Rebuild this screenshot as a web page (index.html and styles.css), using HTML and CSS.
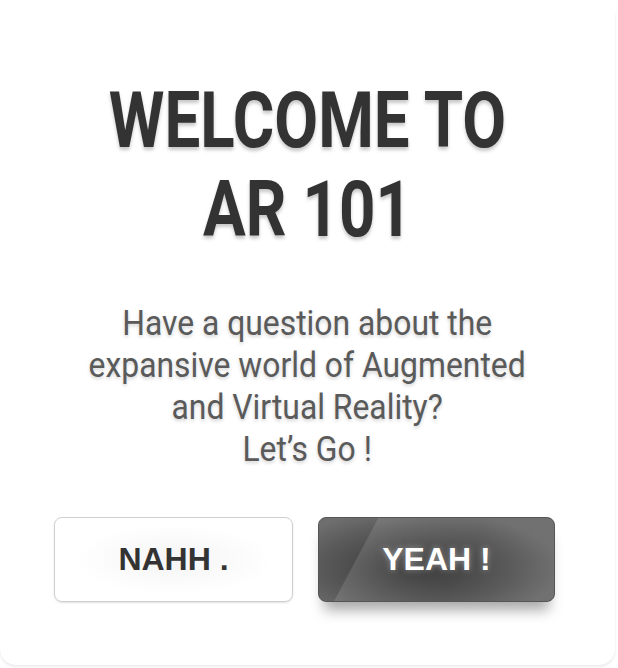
FILE: index.html
```html
<!DOCTYPE html>
<html>
<head>
<meta charset="utf-8">
<link rel="stylesheet" href="styles.css">
</head>
<body>
<div class="card">
  <h1 class="title"><span class="narrow">WELCOME TO<br>AR 101</span></h1>
  <p class="lead"><span class="narrow-lead">Have a question about the<br>expansive world of Augmented<br>and Virtual Reality?<br>Let’s Go !</span></p>
  <div class="actions">
    <button class="btn btn-no">NAHH .</button>
    <button class="btn btn-yes">YEAH !</button>
  </div>
</div>
</body>
</html>
```
FILE: styles.css
```css
html, body {
  margin: 0;
  padding: 0;
  background: #fff;
}
body {
  width: 618px;
  height: 668px;
  overflow: hidden;
}
.card {
  box-sizing: border-box;
  margin: 12px 3px 0 0;
  height: 653px;
  background: #fff;
  border-radius: 0 0 16px 16px;
  box-shadow: 0 2px 3px rgba(0,0,0,0.08), 0 0 1px rgba(0,0,0,0.06);
  padding-top: 65px;
  display: flex;
  flex-direction: column;
  align-items: center;
}
.title {
  margin: 0;
  font-family: Roboto, "Liberation Sans", sans-serif;
  font-weight: 700;
  font-size: 77px;
  line-height: 89px;
  color: #333;
  text-align: center;
  text-shadow: 0 3px 4px rgba(0,0,0,0.22);
}
.narrow {
  display: inline-block;
  transform: scaleX(0.826);
}
.lead {
  margin: 48px 0 0;
  font-family: Roboto, "Liberation Sans", sans-serif;
  font-weight: 400;
  font-size: 35px;
  line-height: 42px;
  color: #5a5a5a;
  text-align: center;
  text-shadow: 0 2px 4px rgba(0,0,0,0.18);
}
.narrow-lead {
  display: inline-block;
  transform: scaleX(0.91);
}
.actions {
  margin-top: 46px;
  display: flex;
  gap: 25px;
  margin-left: -6px;
}
.btn {
  box-sizing: border-box;
  width: 239px;
  height: 85px;
  border-radius: 8px;
  font-family: "Liberation Sans", Arial, sans-serif;
  font-weight: 700;
  font-size: 32px;
  cursor: pointer;
}
.btn-no {
  background: radial-gradient(ellipse at center, #f4f4f4 0%, #fff 60%);
  border: 1px solid #cfcfcf;
  box-shadow: 0 1px 2px rgba(0,0,0,0.12);
  color: #333;
}
.btn-yes {
  width: 237px;
  border: 1px solid #555;
  color: #fff;
  background:
    linear-gradient(118deg, rgba(255,255,255,0) 0%, rgba(255,255,255,0) 21%, rgba(255,255,255,0.12) 21.5%, rgba(255,255,255,0.02) 60%),
    radial-gradient(ellipse 60% 70% at 42% 60%, #333 0%, #5a5a5a 70%, #6e6e6e 100%);
  box-shadow: 0 14px 14px -6px rgba(0,0,0,0.35);
  text-shadow: 0 0 6px rgba(255,255,255,0.4);
}
```
